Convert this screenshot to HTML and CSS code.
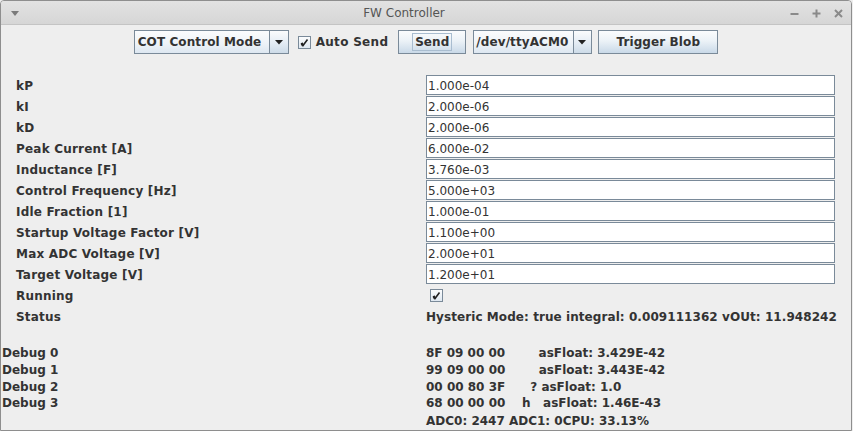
FILE: index.html
```html
<!DOCTYPE html>
<html>
<head>
<meta charset="utf-8">
<title>FW Controller</title>
<link rel="stylesheet" href="styles.css">
</head>
<body>
<div class="window">
  <div class="titlebar">
    <div class="tb-left">
      <svg width="8" height="5" viewBox="0 0 8 5"><polygon points="0,0 8,0 4,5" fill="#7a7a7a"/></svg>
    </div>
    <div class="title">FW Controller</div>
    <div class="tb-right">
      <svg width="9" height="9" viewBox="0 0 9 9"><line x1="0.5" y1="5" x2="8.5" y2="5" stroke="#8a8a8a" stroke-width="2"/></svg>
      <svg width="9" height="9" viewBox="0 0 9 9"><line x1="0.5" y1="4.5" x2="8.5" y2="4.5" stroke="#8a8a8a" stroke-width="2"/><line x1="4.5" y1="0.5" x2="4.5" y2="8.5" stroke="#8a8a8a" stroke-width="2"/></svg>
      <svg width="9" height="9" viewBox="0 0 9 9"><line x1="1" y1="1" x2="8" y2="8" stroke="#8a8a8a" stroke-width="2"/><line x1="8" y1="1" x2="1" y2="8" stroke="#8a8a8a" stroke-width="2"/></svg>
    </div>
  </div>

  <div class="toolbar">
    <div class="combo combo-mode">
      <span class="combo-text">COT Control Mode</span>
      <span class="combo-arrow"><svg width="8" height="5" viewBox="0 0 8 5"><polygon points="0,0 8,0 4,4.5" fill="#222"/></svg></span>
    </div>
    <div class="check check-auto">
      <span class="box"><svg width="11" height="11" viewBox="0 0 11 11"><path d="M2.5 6 L4 8.5 L8.5 2.5" fill="none" stroke="#222" stroke-width="1.6"/><path d="M2.6 6.2 L4 8.6" stroke="#222" stroke-width="2.4"/></svg></span>
      <span class="check-label">Auto Send</span>
    </div>
    <button class="btn btn-send"><span class="focus">Send</span></button>
    <div class="combo combo-port">
      <span class="combo-text">/dev/ttyACM0</span>
      <span class="combo-arrow"><svg width="8" height="5" viewBox="0 0 8 5"><polygon points="0,0 8,0 4,4.5" fill="#222"/></svg></span>
    </div>
    <button class="btn btn-blob">Trigger Blob</button>
  </div>

  <div class="form">
    <div class="label">kP</div><div class="field">1.000e-04</div>
    <div class="label">kI</div><div class="field">2.000e-06</div>
    <div class="label">kD</div><div class="field">2.000e-06</div>
    <div class="label">Peak Current [A]</div><div class="field">6.000e-02</div>
    <div class="label">Inductance [F]</div><div class="field">3.760e-03</div>
    <div class="label">Control Frequency [Hz]</div><div class="field">5.000e+03</div>
    <div class="label">Idle Fraction [1]</div><div class="field">1.000e-01</div>
    <div class="label">Startup Voltage Factor [V]</div><div class="field">1.100e+00</div>
    <div class="label">Max ADC Voltage [V]</div><div class="field">2.000e+01</div>
    <div class="label">Target Voltage [V]</div><div class="field">1.200e+01</div>
    <div class="label">Running</div>
    <div class="val"><span class="box box-run"><svg width="11" height="11" viewBox="0 0 11 11"><path d="M2.5 6 L4 8.5 L8.5 2.5" fill="none" stroke="#222" stroke-width="1.6"/><path d="M2.6 6.2 L4 8.6" stroke="#222" stroke-width="2.4"/></svg></span></div>
    <div class="label">Status</div><div class="val status">Hysteric Mode: true integral: 0.009111362 vOUt: 11.948242</div>
  </div>

  <div class="debug">
    <div class="dlabel">Debug 0</div><div class="dval">8F 09 00 00        asFloat: 3.429E-42</div>
    <div class="dlabel">Debug 1</div><div class="dval">99 09 00 00        asFloat: 3.443E-42</div>
    <div class="dlabel">Debug 2</div><div class="dval">00 00 80 3F      ? asFloat: 1.0</div>
    <div class="dlabel">Debug 3</div><div class="dval">68 00 00 00    h   asFloat: 1.46E-43</div>
    <div class="dlabel adc"></div><div class="dval adc">ADC0: 2447 ADC1: 0CPU: 33.13%</div>
  </div>
</div>
</body>
</html>
```

FILE: styles.css
```css
html, body {
  margin: 0;
  padding: 0;
  background: #eeeeee;
}

body {
  width: 853px;
  height: 431px;
  overflow: hidden;
  font-family: "DejaVu Sans", sans-serif;
  font-size: 12px;
  color: #333333;
}

.window {
  box-sizing: border-box;
  width: 852px;
  height: 431px;
  border: 1px solid #8e8e8e;
  border-radius: 4px 4px 0 0;
  background: #eeeeee;
  overflow: hidden;
}

/* Title bar */
.titlebar {
  display: flex;
  align-items: center;
  height: 23px;
  border-bottom: 1px solid #c4c4c4;
  background: linear-gradient(to bottom, #e2e2e2 0%, #d6d6d6 100%);
}

.tb-left {
  width: 30px;
  display: flex;
  align-items: center;
  padding-left: 10px;
  box-sizing: border-box;
  padding-top: 2px;
}

.tb-left svg { display: block; }

.title {
  flex: 1;
  text-align: center;
  color: #555555;
  font-size: 12px;
  padding-top: 1px;
}

.tb-right {
  width: 74px;
  display: flex;
  align-items: center;
  justify-content: flex-end;
  gap: 13px;
  padding-right: 8px;
  box-sizing: border-box;
  padding-top: 1px;
}

.tb-right svg { display: block; }

/* Toolbar */
.toolbar {
  display: flex;
  justify-content: center;
  align-items: center;
  margin-top: 5px;
  height: 24px;
  font-weight: bold;
}

.combo {
  display: flex;
  height: 24px;
  box-sizing: border-box;
  border: 1px solid #7a8a99;
  background: linear-gradient(to bottom, #fbfcfd 0%, #eef3f8 55%, #dde7f1 100%);
}

.combo-text {
  display: flex;
  align-items: center;
  padding-left: 3px;
  white-space: nowrap;
  overflow: hidden;
  letter-spacing: 0.1px;
}

.combo-arrow {
  display: flex;
  align-items: center;
  justify-content: center;
  border-left: 1px solid #7a8a99;
  background: linear-gradient(to bottom, #fbfcfd 0%, #e4ecf4 55%, #cddbe8 100%);
}

.combo-mode { width: 155px; }
.combo-mode .combo-text { width: 135px; }
.combo-mode .combo-arrow { width: 18px; }

.combo-port { width: 119px; margin-left: 7px; }
.combo-port .combo-text { width: 98px; padding-left: 2px; }
.combo-port .combo-arrow { width: 18px; }

.check {
  display: flex;
  align-items: center;
  margin-left: 9px;
}

.box {
  display: inline-flex;
  align-items: center;
  justify-content: center;
  width: 13px;
  height: 13px;
  box-sizing: border-box;
  border: 1px solid #7a8a99;
  background: linear-gradient(to bottom, #fbfcfd 0%, #dfe8f1 100%);
}

.box svg { display: block; }

.check-label { margin-left: 5px; letter-spacing: 0.3px; }

.btn {
  height: 24px;
  box-sizing: border-box;
  border: 1px solid #7a8a99;
  background: linear-gradient(to bottom, #fbfcfd 0%, #ecf2f7 45%, #c9d9e8 100%);
  font-family: "DejaVu Sans", sans-serif;
  font-size: 12px;
  font-weight: bold;
  color: #333333;
  padding: 0;
  display: flex;
  align-items: center;
  justify-content: center;
  letter-spacing: 0.1px;
}

.btn-send { width: 68px; margin-left: 10px; }
.btn-blob { width: 120px; margin-left: 6px; }

.focus {
  border: 1px solid #a9bdd0;
  padding: 1px 2px 1px 2px;
  line-height: 14px;
}

/* Form */
.form {
  display: grid;
  grid-template-columns: 410px 409px;
  grid-auto-rows: 20px;
  row-gap: 1px;
  padding-left: 15px;
  margin-top: 21px;
}

.label {
  font-weight: bold;
  line-height: 20px;
  padding-top: 1px;
  white-space: nowrap;
  letter-spacing: 0.2px;
}

.field {
  box-sizing: border-box;
  height: 20px;
  border: 1px solid #7a8a99;
  background: #ffffff;
  padding-left: 1px;
  line-height: 20px;
  white-space: nowrap;
  overflow: hidden;
}

.val {
  display: flex;
  align-items: center;
  line-height: 20px;
}

.box-run { margin-left: 4px; margin-top: 1px; }

.status {
  font-weight: bold;
  white-space: nowrap;
  padding-top: 1px;
  letter-spacing: 0.07px;
}

/* Debug */
.debug {
  display: grid;
  grid-template-columns: 424px 1fr;
  grid-auto-rows: 16.8px;
  padding-left: 1px;
  margin-top: 19px;
  font-weight: bold;
}

.dlabel, .dval {
  line-height: 16.8px;
  white-space: pre;
}

.adc { margin-top: 1px; }
```
